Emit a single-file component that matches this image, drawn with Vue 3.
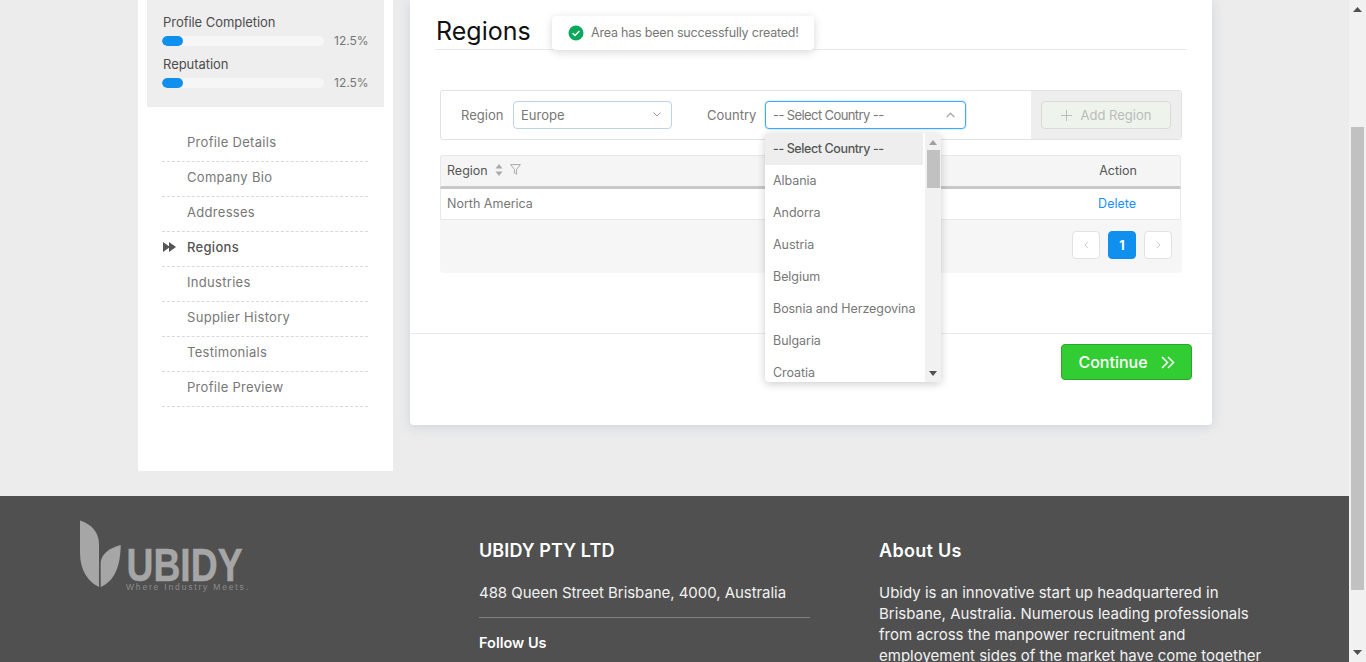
<script setup>
const stats = [
  { label: 'Profile Completion', value: 12.5 },
  { label: 'Reputation', value: 12.5 }
]
const menu = ['Profile Details', 'Company Bio', 'Addresses', 'Regions', 'Industries', 'Supplier History', 'Testimonials', 'Profile Preview']
const countries = ['Albania', 'Andorra', 'Austria', 'Belgium', 'Bosnia and Herzegovina', 'Bulgaria', 'Croatia']
</script>

<template>
  <div class="screen">
    <div class="page">
      <div class="content">
        <aside class="sidebar">
          <div class="stats">
            <div v-for="s in stats" :key="s.label" class="stat">
              <div class="stat-label">{{ s.label }}</div>
              <div class="stat-row">
                <div class="bar"><div class="fill" :style="{ width: s.value + '%' }"></div></div>
                <span class="pct">{{ s.value }}%</span>
              </div>
            </div>
          </div>
          <ul class="menu">
            <li v-for="m in menu" :key="m" :class="{ active: m === 'Regions' }">
              <svg v-if="m === 'Regions'" class="ff" width="13" height="10" viewBox="0 0 13 10"><path d="M0 0l7 5-7 5zM6 0l7 5-7 5z" fill="#555"/></svg>
              {{ m }}
            </li>
          </ul>
        </aside>

        <main class="card">
          <div class="card-head">
            <h1>Regions</h1>
            <div class="toast">
              <svg width="16" height="16" viewBox="0 0 16 16"><circle cx="8" cy="8" r="7.5" fill="#0aa85a"/><path d="M4.6 8.2l2.4 2.3 4.4-4.6" fill="none" stroke="#fff" stroke-width="1.4"/></svg>
              <span>Area has been successfully created!</span>
            </div>
          </div>

          <div class="filter">
            <div class="filter-fields">
              <label class="lab-region">Region</label>
              <div class="select region-select">
                <span>Europe</span>
                <svg width="8" height="5" viewBox="0 0 8 5"><path d="M.5.5L4 4 7.5.5" fill="none" stroke="#999"/></svg>
              </div>
              <label class="lab-country">Country</label>
              <div class="select country-select">
                <span class="placeholder">-- Select Country --</span>
                <svg width="9" height="6" viewBox="0 0 9 6"><path d="M.7 5L4.5 1.2 8.3 5" fill="none" stroke="#aaa" stroke-width="1.3"/></svg>
                <div class="dropdown">
                  <div class="options">
                    <div class="option selected">-- Select Country --</div>
                    <div v-for="c in countries" :key="c" class="option">{{ c }}</div>
                  </div>
                  <div class="dd-scroll">
                    <svg width="8" height="5" viewBox="0 0 8 5"><path d="M4 0l4 5H0z" fill="#a0a0a0"/></svg>
                    <div class="dd-thumb"></div>
                    <svg class="dd-down" width="8" height="5" viewBox="0 0 8 5"><path d="M0 0h8L4 5z" fill="#505050"/></svg>
                  </div>
                </div>
              </div>
            </div>
            <div class="filter-action">
              <button class="add" type="button">
                <svg width="11" height="11" viewBox="0 0 11 11"><path d="M5.5 0v11M0 5.5h11" stroke="#bbb" stroke-width="1"/></svg>
                Add Region
              </button>
            </div>
          </div>

          <div class="table">
            <div class="thead">
              <span class="th-region">Region</span>
              <svg class="sort" width="8" height="12" viewBox="0 0 8 12"><path d="M4 0l3.5 4.5h-7zM4 12L.5 7.5h7z" fill="#aaa"/></svg>
              <svg class="filt" width="11" height="11" viewBox="0 0 11 11"><path d="M.6.6h9.8L6.6 5.4v4.8L4.4 9V5.4z" fill="none" stroke="#aaa"/></svg>
              <span class="th-action">Action</span>
            </div>
            <div class="trow">
              <span class="td-region">North America</span>
              <a class="del">Delete</a>
            </div>
            <div class="pager">
              <button class="pg" type="button"><svg width="5" height="8" viewBox="0 0 5 8"><path d="M4 .8L1 4l3 3.2" fill="none" stroke="#ccc"/></svg></button>
              <button class="pg current" type="button">1</button>
              <button class="pg" type="button"><svg width="5" height="8" viewBox="0 0 5 8"><path d="M1 .8L4 4 1 7.2" fill="none" stroke="#ccc"/></svg></button>
            </div>
          </div>

          <div class="card-foot">
            <button class="continue" type="button">
              Continue
              <svg width="14" height="13" viewBox="0 0 14 13"><path d="M1 1l5.5 5.5L1 12M7 1l5.5 5.5L7 12" fill="none" stroke="#fff" stroke-width="1.5"/></svg>
            </button>
          </div>
        </main>
      </div>

      <footer class="footer">
        <div class="logo">
          <svg width="200" height="74" viewBox="0 0 200 74">
            <path d="M0 .5C11 4 19 12 19 24V67C8 62 0 50 0 33z" fill="#a6a6a6"/>
            <path d="M40.7 25C40.5 45 35 61 20.7 67V42C22 33 30 28 40.7 25z" fill="#a6a6a6"/>
            <text x="46.5" y="61" textLength="116" lengthAdjust="spacingAndGlyphs" font-size="46" font-weight="700" font-family="Liberation Sans, sans-serif" fill="#a6a6a6" stroke="#a6a6a6" stroke-width=".5">UBIDY</text>
            <text x="46" y="70" textLength="122" font-size="8.5" font-family="Liberation Sans, sans-serif" fill="#8c8c8c">Where Industry Meets.</text>
          </svg>
        </div>
        <div class="col col-company">
          <h3>UBIDY PTY LTD</h3>
          <p class="addr">488 Queen Street Brisbane, 4000, Australia</p>
          <hr />
          <h4>Follow Us</h4>
        </div>
        <div class="col col-about">
          <h3 class="about-title">About Us</h3>
          <p class="about">Ubidy is an innovative start up headquartered in<br />Brisbane, Australia. Numerous leading professionals<br />from across the manpower recruitment and<br />employement sides of the market have come together</p>
        </div>
      </footer>
    </div>

    <div class="scrollbar">
      <svg class="arrow-up" width="9" height="5" viewBox="0 0 9 5"><path d="M4.5 0L9 5H0z" fill="#505050"/></svg>
      <div class="thumb"></div>
      <svg class="arrow-down" width="9" height="5" viewBox="0 0 9 5"><path d="M0 0h9L4.5 5z" fill="#505050"/></svg>
    </div>
  </div>
</template>

<style>
html, body { margin: 0; background: #ececec; overflow: hidden; }
</style>

<style scoped>
* { box-sizing: border-box; }
.screen {
  display: flex; width: 1366px; height: 662px; overflow: hidden;
  font-family: Inter, "Liberation Sans", sans-serif; font-size: 12.5px; color: #777;
}
.page { width: 1349px; flex: none; background: #ececec; }
.content { display: flex; align-items: flex-start; gap: 17px; height: 496px; padding-left: 138px; }

.sidebar { width: 255px; height: 471px; background: #fff; padding: 0 9px; }
.stats { height: 107px; background: #eee; padding: 14px 16px 0 15px; }
.stat { height: 42px; }
.stat-label { font-size: 13px; line-height: 16px; color: #4d4d4d; letter-spacing: -.05px; padding-left: 1px; }
.stat-row { display: flex; align-items: center; margin-top: 5px; height: 12px; }
.bar { width: 162px; height: 10px; flex: none; border-radius: 5px; background: #f6f6f6; overflow: hidden; margin-right: 10px; }
.fill { height: 100%; min-width: 21px; border-radius: 5px; background: #0f8fee; }
.pct { font-size: 12px; color: #777; white-space: nowrap; margin-top: -2px; }
.menu { list-style: none; margin: 20px 0 0; padding: 0 16px 0 15px; }
.menu li {
  position: relative; height: 35px; line-height: 31px; padding-left: 25px;
  border-bottom: 1px dashed #d9d9d9; font-size: 13px; color: #777; letter-spacing: .3px;
}
.menu li.active { color: #555; font-weight: 500; }
.ff { position: absolute; left: 1px; top: 10px; }

.card {
  position: relative; width: 802px; height: 425px; background: #fff; border-radius: 0 0 4px 4px;
  box-shadow: 0 2px 12px rgba(150, 165, 185, .35); padding: 0 25px;
}
.card-head { height: 50px; border-bottom: 1px solid #eaeaea; }
h1 { margin: 0; padding-top: 15px; padding-left: 1px; font-size: 25px; line-height: 32px; font-weight: 400; color: #111; }
.toast {
  position: absolute; left: 142px; top: 16px; width: 262px; height: 34px;
  display: flex; align-items: center; gap: 7px; padding: 0 0 1px 16px;
  background: #fff; border-radius: 4px; box-shadow: 0 2px 8px rgba(0, 0, 0, .16);
  font-size: 12.5px; color: #777; white-space: nowrap; letter-spacing: -.2px;
}

.filter {
  display: flex; width: 742px; height: 50px; margin: 40px 0 0 5px;
  border: 1px solid #e2e2e2; border-radius: 3px; background: #fff;
}
.filter-fields { flex: 1; display: flex; align-items: center; }
.lab-region { margin-left: 20px; width: 52px; font-size: 13px; color: #777; }
.lab-country { margin-left: 35px; width: 58px; font-size: 13px; color: #777; }
.select {
  position: relative; height: 28px; display: flex; align-items: center; justify-content: space-between;
  padding: 0 10px 1px 7px; border: 1px solid #bcd2e6; border-radius: 4px; background: #fff; font-size: 13px; color: #777;
}
.placeholder { letter-spacing: -.6px; }
.region-select { width: 159px; }
.country-select { width: 201px; border-color: #40a9ff; box-shadow: 0 0 0 1px rgba(24, 144, 255, .15); }
.filter-action { width: 150px; background: #eee; display: flex; align-items: center; justify-content: center; }
.add {
  width: 130px; height: 28px; display: flex; align-items: center; justify-content: center; gap: 9px;
  background: #eef4ec; border: 1px solid #d9d9d9; border-radius: 4px;
  font: inherit; font-size: 13px; color: #bbb;
}

.dropdown {
  position: absolute; left: -1px; top: 31px; z-index: 5; width: 176px; height: 249px;
  display: flex; overflow: hidden; background: #fff; border-radius: 4px;
  box-shadow: 0 2px 8px rgba(0, 0, 0, .2);
}
.options { width: 158px; flex: none; overflow: hidden; }
.option { height: 32px; line-height: 31px; padding-left: 8px; font-size: 12.5px; color: #777; white-space: nowrap; letter-spacing: -.05px; }
.option.selected { background: #eee; color: #555; font-weight: 500; letter-spacing: -.4px; }
.dd-scroll { position: relative; flex: 1; background: #f1f1f1; display: flex; flex-direction: column; align-items: center; padding-top: 7px; margin-left: 2px; }
.dd-thumb { width: 13px; height: 38px; margin-top: 5px; background: #c1c1c1; }
.dd-down { position: absolute; bottom: 6px; left: 4px; }

.table { width: 742px; margin: 15px 0 0 5px; }
.thead {
  position: relative; height: 34px; display: flex; align-items: center; padding: 0 6px 1px;
  background: #f5f5f5; border: 1px solid #e8e8e8; border-bottom: 3px solid #c8c8c8; border-radius: 3px 3px 0 0;
  font-size: 12.5px; color: #555; width: 741px;
}
.sort { margin-left: 7px; margin-top: -2px; }
.filt { margin-left: 7px; margin-top: -2px; }
.th-action { margin-left: auto; margin-right: 37px; }
.trow {
  height: 31px; width: 741px; display: flex; align-items: center; justify-content: space-between;
  padding: 0 44px 1px 6px; border: 1px solid #e8e8e8; border-top: none; font-size: 12.5px; color: #777;
}
.del { color: #1890ff; }
.pager { height: 53px; background: #f6f6f6; border-radius: 0 0 4px 4px; display: flex; align-items: center; justify-content: flex-end; gap: 8px; padding: 0 10px 3px 0; }
.pg {
  width: 28px; height: 28px; padding: 0; display: flex; align-items: center; justify-content: center;
  background: #fff; border: 1px solid #e2e2e2; border-radius: 4px; font: inherit; font-size: 12.5px;
}
.pg.current { background: #0f8fee; border-color: #0f8fee; color: #fff; font-weight: 700; }

.card-foot { margin: 60px -25px 0; border-top: 1px solid #eaeaea; display: flex; justify-content: flex-end; padding: 10px 20px 0 0; }
.continue {
  width: 131px; height: 36px; display: flex; align-items: center; justify-content: center; gap: 13px;
  background: #32cd32; border: 1px solid #2ba52b; border-radius: 4px;
  font: inherit; font-size: 16px; font-weight: 500; color: #fff;
}

.footer { display: flex; align-items: flex-start; height: 166px; background: #505050; color: #fff; overflow: hidden; }
.logo { width: 479px; padding: 24px 0 0 80px; flex: none; }
.logo svg { display: block; }
.col { flex: none; padding-top: 44px; }
.col-company { width: 400px; }
.col-about { width: 400px; }
h3 { margin: 0; font-size: 18px; line-height: 22px; font-weight: 600; letter-spacing: .1px; }
.about-title { letter-spacing: .3px; }
.addr { margin: 20px 0 0; font-size: 15px; line-height: 21px; letter-spacing: -.05px; color: #f2f2f2; white-space: nowrap; }
hr { width: 331px; margin: 14px 0 0; border: none; border-top: 1px solid #7e7e7e; }
h4 { margin: 14px 0 0; font-size: 14.5px; line-height: 21px; font-weight: 600; letter-spacing: 0; }
.about { margin: 20px 0 0; font-size: 15px; line-height: 21px; color: #f2f2f2; white-space: nowrap; }

.scrollbar { position: relative; width: 17px; flex: none; background: #f1f1f1; display: flex; flex-direction: column; align-items: center; }
.arrow-up { margin-top: 7px; }
.thumb { width: 13px; height: 463px; margin-top: 115px; background: #c1c1c1; }
.arrow-down { margin-top: auto; margin-bottom: 7px; }
</style>
